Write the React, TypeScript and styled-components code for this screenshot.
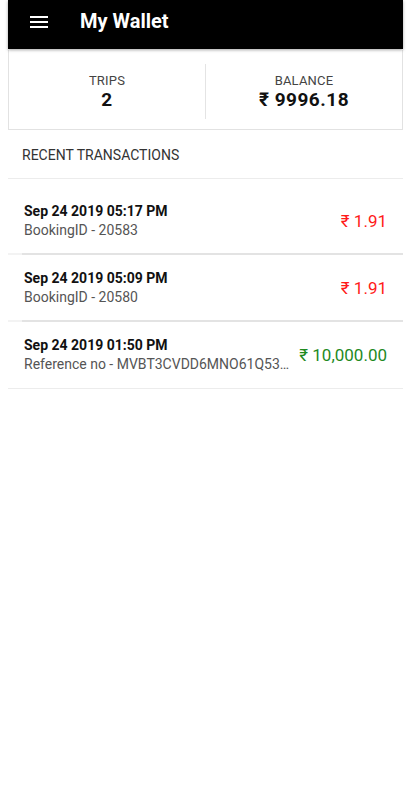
import styled, { createGlobalStyle } from "styled-components";

type Txn = {
  date: string;
  label: string;
  amount: string;
  credit?: boolean;
};

const transactions: Txn[] = [
  { date: "Sep 24 2019 05:17 PM", label: "BookingID - 20583", amount: "1.91" },
  { date: "Sep 24 2019 05:09 PM", label: "BookingID - 20580", amount: "1.91" },
  {
    date: "Sep 24 2019 01:50 PM",
    label: "Reference no - MVBT3CVDD6MNO61Q53K2L9",
    amount: "10,000.00",
    credit: true,
  },
];

export default function App() {
  return (
    <>
      <GlobalStyle />
      <Screen>
        <AppBar>
          <MenuButton aria-label="menu">
            <svg width="18" height="12" viewBox="0 0 18 12">
              <rect x="0" y="0" width="18" height="2" fill="#fff" />
              <rect x="0" y="5" width="18" height="2" fill="#fff" />
              <rect x="0" y="10" width="18" height="2" fill="#fff" />
            </svg>
          </MenuButton>
          <Title>My Wallet</Title>
        </AppBar>

        <StatsCard>
          <Stat>
            <StatLabel>TRIPS</StatLabel>
            <StatValue>2</StatValue>
          </Stat>
          <StatDivider />
          <Stat>
            <StatLabel>BALANCE</StatLabel>
            <StatValue>₹ 9996.18</StatValue>
          </Stat>
        </StatsCard>

        <SectionTitle>RECENT TRANSACTIONS</SectionTitle>

        <TxnList>
          {transactions.map((t, i) => (
            <TxnRow key={t.date} $last={i === transactions.length - 1}>
              <TxnInfo>
                <TxnDate>{t.date}</TxnDate>
                <TxnLabel>{t.label}</TxnLabel>
              </TxnInfo>
              <TxnAmount $credit={t.credit}>₹ {t.amount}</TxnAmount>
            </TxnRow>
          ))}
        </TxnList>
      </Screen>
    </>
  );
}

const GlobalStyle = createGlobalStyle`
  html, body {
    margin: 0;
    padding: 0;
    background: #fff;
  }
  body {
    font-family: Roboto, "Liberation Sans", sans-serif;
    -webkit-font-smoothing: antialiased;
  }
`;

const Screen = styled.div`
  margin: 0 7px 0 8px;
  min-height: 800px;
  background: #fff;
`;

const AppBar = styled.header`
  height: 49px;
  background: #000;
  display: flex;
  align-items: center;
  box-shadow: 0 1px 3px rgba(0, 0, 0, 0.35);
  position: relative;
  z-index: 1;
`;

const MenuButton = styled.div`
  width: 18px;
  height: 12px;
  margin-left: 22px;
  margin-right: 32px;
  display: flex;
  margin-top: -6px;
`;

const Title = styled.h1`
  margin: 0;
  color: #fff;
  font-size: 20px;
  font-weight: 700;
  margin-top: -8px;
`;

const StatsCard = styled.section`
  display: flex;
  align-items: center;
  height: 79px;
  margin-top: 1px;
  border: 1px solid #e2e2e2;
  border-top: none;
`;

const Stat = styled.div`
  flex: 1;
  display: flex;
  flex-direction: column;
  align-items: center;
  padding-top: 4px;
`;

const StatLabel = styled.span`
  font-size: 13px;
  line-height: 16px;
  color: #444;
  letter-spacing: 0.2px;
`;

const StatValue = styled.span`
  font-size: 19px;
  line-height: 22px;
  font-weight: 700;
  color: #111;
  letter-spacing: 0.5px;
`;

const StatDivider = styled.div`
  width: 1px;
  height: 55px;
  background: #e4e4e4;
  margin-top: 4px;
`;

const SectionTitle = styled.h2`
  margin: 0;
  padding: 17px 14px 15px;
  font-size: 14px;
  line-height: 16px;
  font-weight: 400;
  color: #333;
  border-bottom: 1px solid #ececec;
`;

const TxnList = styled.div`
  padding-top: 9px;
`;

const TxnRow = styled.div<{ $last?: boolean }>`
  display: flex;
  align-items: center;
  padding: 14px 16px ${({ $last }) => ($last ? "14px" : "13px")} 16px;
  border-bottom: ${({ $last }) => ($last ? "1px solid #ececec" : "2px solid #e3e3e3")};
  ${({ $last }) =>
    !$last &&
    `border-image: linear-gradient(to right, #f3f3f3 15px, #e3e3e3 15px) 1;`}
`;

const TxnInfo = styled.div`
  flex: 1;
  min-width: 0;
  display: flex;
  flex-direction: column;
`;

const TxnDate = styled.span`
  font-size: 14px;
  line-height: 19px;
  font-weight: 700;
  color: #111;
`;

const TxnLabel = styled.span`
  font-size: 14px;
  line-height: 19px;
  color: #555;
  white-space: nowrap;
  overflow: hidden;
  text-overflow: ellipsis;
`;

const TxnAmount = styled.span<{ $credit?: boolean }>`
  flex-shrink: 0;
  margin-left: 8px;
  font-size: 17px;
  color: ${({ $credit }) => ($credit ? "#1f8a1f" : "#ff1a1a")};
`;
